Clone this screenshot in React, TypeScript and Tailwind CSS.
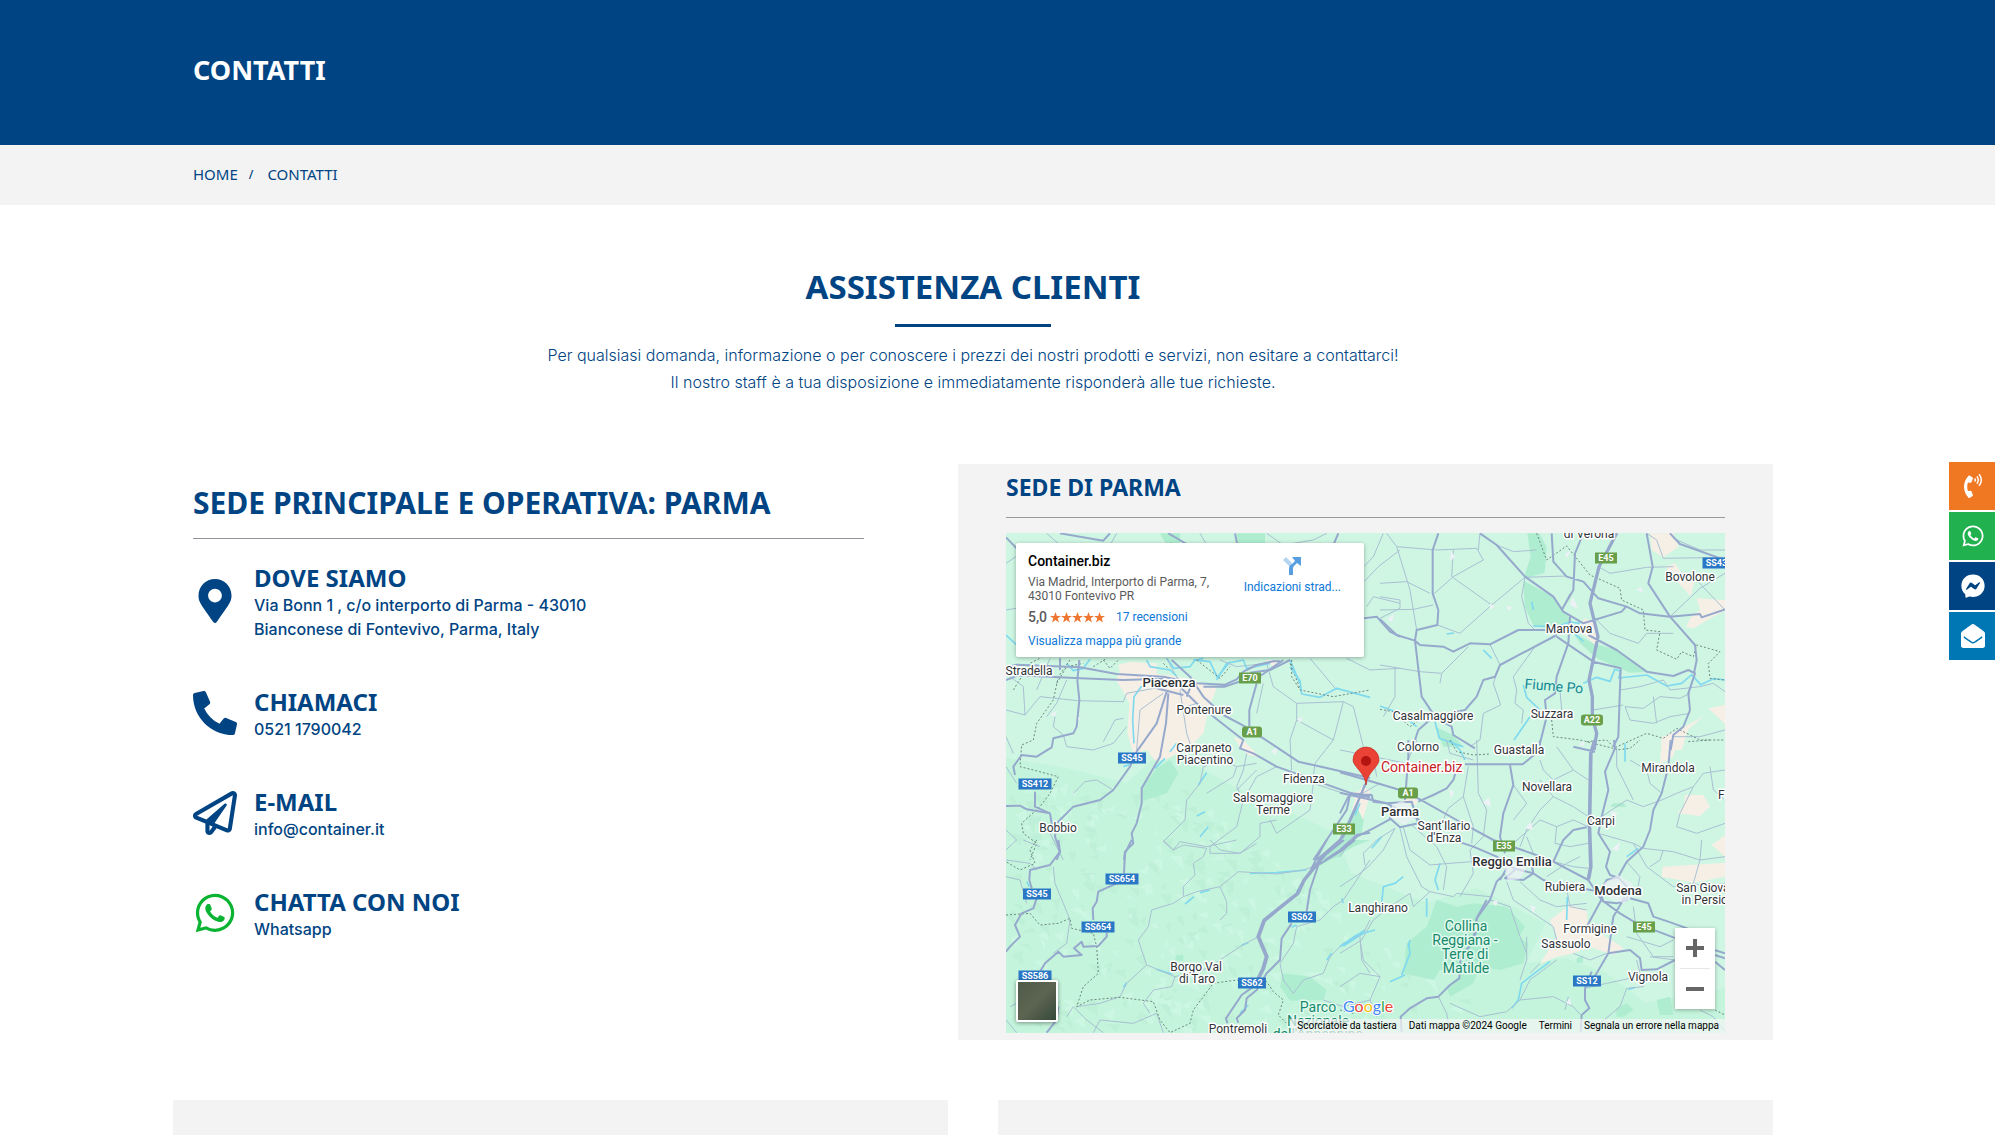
import type { ReactNode } from "react";
import {
  FaEnvelopeOpen,
  FaFacebookMessenger,
  FaMapMarkerAlt,
  FaPhoneAlt,
  FaPhoneVolume,
  FaRegPaperPlane,
  FaWhatsapp,
} from "react-icons/fa";

const heading = "font-['Noto_Sans','Open_Sans',sans-serif] font-bold uppercase text-[#004483]";

/* ---------- Map drawing ---------- */

type Sheet = {
  at: string;
  urban?: string;
  wood?: string;
  water?: string;
  minor?: string;
  major?: string;
  border?: string;
};

// Each sheet is drawn at three times the map's scale, from its own corner.
const sheets: Sheet[] = [
  {
    at: "translate(-56 -83) scale(.33333)",
    wood: "M630 250H690V285H650ZM860 250H945V285H865Z",
    urban: "M505 645L540 636L620 640L620 720H520Z",
    water:
      "M168 555L200 585M350 640L370 662L400 655L420 628M650 625L672 655L720 650L735 630L760 625M800 690L830 640L880 630L890 655L960 640M1020 630L1050 700",
    minor:
      "M168 340L198 320M168 480L198 475M290 250L330 285M500 250L480 285M750 250L770 285M950 250L1000 285L1090 270L1130 250M1242 395L1285 350L1350 300M1242 350L1270 320L1300 250M1250 470L1270 440L1350 460M650 625L700 720M1080 625L1160 720M300 625L260 720M1190 625L1260 660L1350 655",
    major:
      "M168 262L205 300M330 250L460 272L480 250M655 250L715 285M855 250L862 285M1165 250L1150 285M1242 505L1280 500L1320 545L1350 560M330 625L330 660M900 668L960 660L1020 630",
    border: "M320 700L350 650L400 640M430 650L470 625M640 640L700 700M1020 640L1050 715M190 720L240 640L270 625",
  },
  {
    at: "translate(374 -83) scale(.33333)",
    wood:
      "M442 250H478L500 292L494 368L430 386L452 320ZM430 392L520 440L575 512L530 535L462 530L434 470ZM580 548L640 580L710 600L800 665L750 668L650 625L600 580ZM165 830L220 855L250 890H190Z",
    urban:
      "M810 250H880L896 290L850 322L815 300ZM856 350L885 340L915 385L942 400L932 438L900 405ZM950 445L1035 450V482L1000 500L940 535L918 532L930 505L960 480ZM845 862L900 838L972 798L925 838L905 900H845ZM985 775L1035 765V822ZM612 505L650 520V590L600 540Z",
    water:
      "M460 528L530 530L570 516L600 520M585 552L610 574M430 705L440 742L480 780M450 800L402 870M610 700L650 682L690 694L704 658L722 664L716 684L800 675L860 708L905 700L935 674L962 704L1000 686L1035 690M0 768L60 790L110 830M165 815L178 865L250 890M455 455L460 480M310 600L335 625M200 552L222 549",
    minor:
      "M20 250L50 290L170 300L290 295L310 330L220 380L158 435M50 290L90 420L110 540M0 400L80 395L150 430M0 440L60 450L60 475L0 505M0 480L100 478L160 465M220 300L215 380L335 465L435 382M335 465L240 550L172 525M435 382L560 378M300 250L295 300M435 382L425 440L445 520L465 540M350 285L400 305L470 300M0 645L120 665L185 670L265 590M185 670L180 700M45 650L45 740L10 800M330 583L360 645M360 645L340 700L362 765L310 790L300 870L270 890M465 590L400 680L410 720L405 760L430 780L425 820M465 590L525 560M545 480L570 430M640 500L690 550L775 580L800 550L880 550M655 350L690 370L800 352L880 350M800 250L830 270L850 325L1035 322M880 265L960 300L1035 300M870 500L960 415L1035 370M940 380L1035 480M722 720L780 710L850 690L870 720L960 710L1000 700L1035 725M735 770L790 775L840 740L900 745L930 730M735 770L750 810L820 820L870 800L930 790M820 740L830 820M640 780L730 765M540 720L545 780L520 790M880 860L960 860L1035 840",
    major:
      "M175 250L158 300L158 430L175 480L172 525L110 540L105 572L125 740L165 800M0 508L50 555L105 572L120 585L190 590L220 605L270 580L330 583L415 540L500 540M530 555L360 645L345 680L310 690L290 740L255 780L160 800L115 840L105 870M300 250L350 285L435 380L520 440L550 485L610 520L725 485L738 470M515 250L520 335L560 380L610 395L655 445L740 470L780 490L870 500L960 492L965 502L1035 478M610 250L585 310L580 420L545 480M530 560L640 635L722 655L715 860L700 890M625 555L710 600L800 665L880 678L925 660L945 670L925 730L930 780L910 830L880 855L872 900M800 250L818 350L805 400L870 500L945 585L950 630L942 670M870 250L900 282L1035 330M570 500L565 580L530 680L525 730L495 750L500 800L480 880M160 800L215 830L220 855L285 895M708 250L655 350L628 460L652 560L625 690L635 740L635 800L648 850L640 900M712 250L659 350L632 460L656 560L629 690L639 740L639 800L652 850L644 900",
    border:
      "M470 250L485 290L500 330L560 288L630 375L720 415L725 450L790 480L795 540L840 545L830 600L890 628L905 605L940 620L950 585L1020 605L985 640L990 685L1035 690M0 778L40 785L90 830L130 800M515 810L520 860L600 870L700 895L800 850L850 865L890 835L960 870L1035 870",
  },
  {
    at: "translate(-16 127) scale(.33333)",
    urban:
      "M378 60L395 25L440 5L500 42L560 48L680 85L655 150L640 220L600 262L525 300L495 302L470 270L430 280L412 220L418 130L400 95ZM732 232L760 240L810 292L775 285L750 262ZM825 0H870L850 20ZM1090 395H1140L1120 480L1100 440Z",
    wood: "M540 300L565 340L530 400L460 422L455 385L500 325ZM1100 440L1135 400L1115 520L1050 590L1010 600L1070 520Z",
    water:
      "M455 78L432 110L428 180L432 250M470 0L480 20L540 30L560 48M610 0L660 5L682 52L720 5M900 20L930 62L935 102L990 112L1040 85L1140 112M650 338L625 375M645 455L620 468M655 500L630 530M495 325L525 295M540 275L560 250M400 320L425 312M1100 440L1080 480",
    minor:
      "M48 150L105 165L150 110L262 122M105 165L100 80L48 40M170 170L200 130L230 60M262 122L400 125L410 100L520 80M220 225L230 260L310 270L370 250L410 200M195 170L190 200L220 225M340 245L375 180L400 175M450 150L520 100M570 90L590 220L600 250L640 320L630 370L590 420L585 480L520 545L550 570L570 545L650 560L740 540M590 140L620 130M450 150L440 270M690 0L740 20L830 10M820 70L800 160M830 10L850 80L920 130L1060 125L1090 140L1125 280L1140 310M920 130L920 180L900 240L905 330M1060 125L1030 240L975 310L970 350M920 180L1030 240M640 320L700 300L740 320L800 310M740 320L730 350L650 400M770 280L760 330L740 380L760 420L740 500L660 560L660 580L750 580L810 530L810 490L860 480M840 480L860 520L960 450L970 370L1060 400M800 330L740 390M860 320L800 350L760 420M370 390L320 360L285 365L250 400M70 280L48 230M48 320L80 370M48 510L80 540L48 570M180 520L220 600",
    major:
      "M48 22L80 14L270 22L380 42L520 50L620 70L705 74L740 58L760 35L800 15L850 4L870 4M48 60L85 46L270 55L400 60L520 56M640 80L705 80L745 66L815 45L880 0M545 0L600 50L640 110L700 165L770 202L820 235L925 305L1000 322L1140 354M555 66L620 130L690 185L760 240L750 265L790 280L860 320L1000 370L1090 402L1140 412M800 70L778 150L778 200M530 95L500 190L440 275L420 320L370 390L330 420L250 440L200 490L195 530L210 575L200 600M535 100L528 190L510 290L455 385L455 430L440 490L425 520L430 550L405 575L402 600M268 0L262 60L268 120L260 200L250 220L190 235L185 262L140 290L95 285L70 320L75 345M135 395L135 440L180 460L185 490L200 500M48 438L90 437L110 448L180 460M590 110L600 85M500 85L580 105M1125 372L1095 450L1060 530L980 600M1080 405L1070 450L1030 510L970 600M1140 518L1100 525L1050 570L1005 600M1080 405H1140",
    border:
      "M240 0L205 50L190 120L140 190L130 240L95 255L90 320L130 330L205 350L180 400L150 440L95 490L100 520L140 550L120 600M340 0L360 25L385 0M905 0L905 50L930 90L1030 110L1140 90M620 0L690 55L720 20",
  },
  {
    at: "translate(334 207) scale(.33333)",
    urban:
      "M965 0H1012L1000 50L960 72ZM1035 165H1090L1110 200L1080 228L1012 220L1030 200ZM968 380L1155 368V410L1060 428L965 410ZM1155 285L1115 315L1155 350ZM690 495L740 510L745 560L830 610L850 625L820 645L750 620L700 640L650 650L600 672L650 590L630 540ZM190 140L235 165L230 195L190 190ZM65 140L90 150L80 200L35 210L50 165Z",
    wood:
      "M290 480L350 500L400 490L500 500L555 560L535 590L565 610L550 670L480 690L420 680L400 730L330 770L320 740L390 680L300 690L280 720L190 700L200 610L260 560ZM55 190L40 260L15 320L0 330V290L30 230ZM820 190H850L860 200H810Z",
    water:
      "M125 290L95 325M190 410L165 430L130 440L125 490M300 370L285 420L295 450M260 475L260 530M75 570L30 600L0 620M895 325L860 350M855 10L855 65M682 470L680 540M60 190L45 225M330 0L360 30L375 60M210 600L205 620",
    minor:
      "M165 265L130 330L85 380L60 400L0 440M165 265L110 300L70 340L75 375M180 265L200 350L245 440L270 455L220 500L210 460L150 500L100 540L65 600L0 640M190 262L210 330L270 375L330 370L460 360M215 255L290 320L320 380L310 450M270 455L340 470L350 460L450 470M385 80L370 170L325 205L300 260M370 170L400 260L395 310M410 0L415 160L440 210L430 290L390 330L400 400L360 470M520 135L560 190L520 240M600 120L640 170L600 210L560 270L540 320M640 170L700 200L745 230M650 20L700 90L640 120L610 90L600 60M700 90L745 120M520 310L600 240L650 260L700 240L745 260M650 260L645 310L690 320L745 310M560 290L580 340M640 365L700 380L745 385M680 445L690 500L740 510M620 410L680 370L720 350M500 425L520 480L580 520L640 560L650 600M450 480L510 500L540 590L560 640M540 425L600 480L650 500L740 490M785 230L860 180L910 200L965 180M775 280L880 310L910 325M880 180L850 120L830 80L830 20M910 325L1000 335L1080 360L1155 350M965 180L1010 160L1060 140L1090 100L1155 90M1060 140L1020 220L1010 260L1070 280L1155 250M880 310L920 380L1000 440L1060 430M870 60L920 90L930 130L965 160M1085 300L1080 360L1060 430L1090 440L1155 430M1110 80L1120 150L1155 180M860 365L900 410L890 460M930 380L960 360L970 330M320 0L330 40L400 60M0 30L100 50L200 70L230 0M100 50L110 110M50 170L120 130M0 350L40 290M880 500L890 580L940 650L1000 650M860 590L960 620L1000 600M700 640L750 660L800 640M600 670L570 700",
    major:
      "M0 97L80 120L180 150L240 178L350 240L460 300L580 342L640 365L745 420L785 480L840 520L890 550L1000 592L1155 640M0 158L60 172L140 190L230 235L310 290L400 320L470 350L520 385L580 400L610 420L680 445L740 448L780 455M762 0L750 40L746 260L750 380L743 415M767 0L755 40L751 260L755 380L748 418M822 0L825 25L795 95L805 150L785 230L775 280L810 335L798 380L810 405L840 415M992 0L985 80L965 160L940 210L930 270L910 320L860 365L835 410M510 75L520 135L490 220L480 290L495 340M375 73L548 73L600 30L600 0M205 0L205 50L195 180M235 185L280 165L320 145L340 120L355 70M155 235L100 265L50 290L0 335M0 220L30 160L95 165L100 185L140 190M80 125L20 260L0 300M495 400L470 425L450 480L410 535L400 600M480 420L500 385M525 390L495 415L550 420L580 400L575 375M640 365L670 300L700 270L740 262M700 20L765 35M785 478L740 560M855 470L820 530L805 640L770 700L755 720M870 475L925 490L940 530L985 545L1050 568M805 640L870 630L900 655L905 690L950 688L1005 660L1030 660M1125 645L1155 655M1125 665L1155 690M140 190L215 185L235 250L180 262L150 235L155 200M780 455L800 420L835 412L870 450L860 480L830 490L790 485Z",
    border: "M330 0L350 35L400 45L450 42M740 5L800 0L830 30L870 25L900 0M1045 5L1110 0",
  },
  {
    at: "translate(-16 307) scale(.33333)",
    wood: "M880 400L960 410L1010 450L1000 480L900 482L870 440ZM560 345L580 345L580 362L555 362ZM1000 45L1080 0H1140L1090 20L985 80Z",
    water:
      "M780 100L860 98L950 90M940 130L920 155M612 170L585 192M660 150L630 158M775 308L755 315M545 402L500 388M1055 175L1060 190M1120 280L1060 318M1025 340L1010 360M410 428L400 442M775 495L750 520M110 125L118 140M905 262L920 255",
    minor:
      "M520 0L550 30L580 15L650 25L640 50L610 70L615 105L580 140L580 170L620 155L690 140L745 95L860 102L940 90L985 75M690 140L710 185L710 220L690 240M580 170L550 190L485 210L475 260L445 300L470 375L410 430L390 470L330 490L260 500M470 375L555 410L545 440L490 450L460 490L480 520M555 410L640 390L690 360L750 320L805 290M1140 60L1060 180L1030 200L990 240L920 260L910 310L870 370L880 420L910 460L940 420L1000 400L1020 350L1060 310L1120 280L1140 240M660 0L690 30L750 40L800 10M150 20L100 0M190 80L195 130L220 190L240 240L230 310L190 340M48 110L90 120L110 190M48 60L120 70L140 90M60 500L100 480L130 540M48 540L80 578M230 530L250 500L290 540L340 578M310 578L330 540L430 550L500 520L520 578M1110 290L1115 360L1140 400M1000 480L1060 500L1140 480",
    major:
      "M205 0L210 35L180 75L120 90L118 120L125 145M140 175L130 205L95 220L75 255L90 290L60 320L48 335M425 0L405 40L402 100M380 130L325 155L320 185L308 205L310 240M350 278L350 290L325 318L280 320L275 305L252 325L275 345L220 350L205 335L165 370L150 395M205 500L200 540L170 578M1055 0L1000 45L940 120L920 160L850 215L820 240L802 290L827 350L817 385L790 440L755 465L708 535L712 550M1062 0L1006 45L945 120L925 162L855 218L825 243L808 290L833 350L823 385L796 440M1095 0L1050 35L985 75L960 150L950 215M905 250L875 295L870 360L830 400L800 450L770 475L765 510L740 535L745 548M1010 0L985 45L960 95",
    border:
      "M140 0L120 30L135 70L90 90L48 65M48 225L120 220L150 255L205 250L240 235L245 265L310 280L320 320L325 400L280 440L260 500L300 480L390 472L490 485L510 540L540 578L600 550L610 510L670 430L740 420L830 425L850 455L880 480L865 525L900 560",
  },
  {
    at: "translate(334 367) scale(.33333)",
    wood: "M828 325L860 310L880 330L850 350H830ZM950 300L990 290L1000 345H960ZM710 175L730 165L728 188L710 188Z",
    water: "M630 185L590 215L545 250L535 300L515 325M195 225L150 245M205 130L210 160L185 225M105 90L50 105L0 140M865 268L885 262",
    minor:
      "M60 120L70 180L120 230L90 300L110 350M0 260L60 220L120 230M295 290L320 340L330 395M330 310L420 350L500 335L540 300L640 290L700 320L722 345M650 180L570 240L540 300M560 110L560 180L540 240M685 290L675 330M735 265L800 250L870 235L920 220M860 265L840 320L780 370L770 395M890 180L910 260L860 265M930 170L1005 180M1080 330L1120 350L1155 395",
    major:
      "M440 0L410 55L405 120L362 170L358 235L330 255L295 290L260 295L210 325L182 350L185 395M755 215L735 265L735 300L748 325L725 345L722 395",
    border: "M0 330L40 340M1125 330L1155 345",
  },
];

// Shaded facets of the Apennine hills, from a repeatable sequence.
const facets = (() => {
  let seed = 17;
  const next = () => {
    seed = (seed * 16807) % 2147483647;
    return seed / 2147483647;
  };
  let dark = "";
  let light = "";
  for (let i = 0; i < 360; i++) {
    const y = 255 + next() * 245;
    const x = next() * (150 + (y - 240) * 1.35);
    const p = `M${x.toFixed(0)} ${y.toFixed(0)}l${(4 + next() * 9).toFixed(0)} ${(-6 + next() * 8).toFixed(0)}l${(-3 + next() * 6).toFixed(0)} ${(5 + next() * 9).toFixed(0)}z`;
    if (i % 2) dark += p;
    else light += p;
  }
  return { dark, light };
})();

const towns: [number, number, string][] = [
  [583, 1, "di Verona"],
  [684, 44, "Bovolone"],
  [563, 96, "Mantova"],
  [546, 181, "Suzzara"],
  [427, 183, "Casalmaggiore"],
  [412, 214, "Colorno"],
  [513, 217, "Guastalla"],
  [23, 138, "Stradella"],
  [198, 177, "Pontenure"],
  [198, 215, "Carpaneto"],
  [199, 227, "Piacentino"],
  [298, 246, "Fidenza"],
  [267, 265, "Salsomaggiore"],
  [267, 277, "Terme"],
  [52, 295, "Bobbio"],
  [438, 293, "Sant'Ilario"],
  [438, 305, "d'Enza"],
  [559, 354, "Rubiera"],
  [372, 375, "Langhirano"],
  [595, 288, "Carpi"],
  [662, 235, "Mirandola"],
  [541, 254, "Novellara"],
  [728, 262, "Finale"],
  [705, 355, "San Giovanni"],
  [707, 367, "in Persiceto"],
  [584, 396, "Formigine"],
  [560, 411, "Sassuolo"],
  [642, 444, "Vignola"],
  [190, 434, "Borgo Val"],
  [191, 446, "di Taro"],
  [232, 496, "Pontremoli"],
];

const cities: [number, number, string][] = [
  [163, 149, "Piacenza"],
  [394, 278, "Parma"],
  [506, 328, "Reggio Emilia"],
  [612, 357, "Modena"],
];

const parks: [number, number, string][] = [
  [460, 393, "Collina"],
  [459, 407, "Reggiana -"],
  [459, 421, "Terre di"],
  [460, 435, "Matilde"],
  [312, 474, "Parco"],
  [312, 488, "Nazionale"],
  [312, 501, "dell'Appennino"],
];

const shields: [number, number, string, string][] = [
  [600, 25, "E45", "#689f4a"],
  [586, 187, "A22", "#689f4a"],
  [244, 145, "E70", "#689f4a"],
  [246, 199, "A1", "#689f4a"],
  [338, 296, "E33", "#689f4a"],
  [402, 260, "A1", "#689f4a"],
  [498, 313, "E35", "#689f4a"],
  [638, 394, "E45", "#689f4a"],
  [713, 30, "SS434", "#2a77c5"],
  [126, 225, "SS45", "#2a77c5"],
  [29, 251, "SS412", "#2a77c5"],
  [116, 346, "SS654", "#2a77c5"],
  [31, 361, "SS45", "#2a77c5"],
  [92, 394, "SS654", "#2a77c5"],
  [29, 443, "SS586", "#2a77c5"],
  [296, 384, "SS62", "#2a77c5"],
  [246, 450, "SS62", "#2a77c5"],
  [581, 448, "SS12", "#2a77c5"],
];

const shieldWidth: Record<number, number> = { 2: 20, 3: 22, 4: 28, 5: 33 };

function MapDrawing() {
  return (
    <svg
      viewBox="0 0 719 500"
      preserveAspectRatio="xMidYMid slice"
      className="block h-full w-full font-[Roboto,sans-serif]"
      role="img"
      aria-label="Mappa di Parma"
    >
      <rect width="719" height="500" fill="#cef6e2" />
      <path
        d="M0 225L60 235L120 250L160 215L230 255L330 300L345 340L420 370L470 355L540 390L520 430L560 425L600 440L640 470L719 455V500H0Z"
        fill="#c4f4db"
      />
      <path d={facets.dark} fill="#b5ecd0" opacity=".45" />
      <path d={facets.light} fill="#d2f8e6" opacity=".6" />
      {sheets.map((s) => (
        <g key={s.at} transform={s.at} fill="none" strokeLinejoin="round">
          <path d={s.wood} fill="#aeedd0" />
          <path d={s.urban} fill="#f6efe6" />
        </g>
      ))}
      {sheets.map((s) => (
        <g key={s.at} transform={s.at} fill="none" strokeLinejoin="round">
          <path d={s.water} stroke="#7fd9ef" strokeWidth="5" />
          <path d={s.minor} stroke="#a9c0d3" strokeWidth="3" />
          <path d={s.border} stroke="#6c8880" strokeWidth="3" strokeDasharray="6 6" />
          <path d={s.major} stroke="#96a9cd" strokeWidth="6" />
        </g>
      ))}
      <g fill="#eef1f6">
        <path d="M386 272l10-4 8 4 8 12-14 8-14-8zM498 332l12-2 10 6-6 10-12 2zM598 350l14-8 14 8 4 10-12 10-14-4z" opacity=".7" />
        <path d="M44 181l7-3-3 6zM291 186l6-2-3 6zM519 295l6-6 2 8zM604 278l8 2-5 5zM443 256l5 3-3 6zM477 270l6-6 2 10zM445 18l4 6-5 4zM559 21l6-4-4 8zM484 71l5 2-5 4zM500 73l6 1-3 4zM381 86l7-5-2 8zM606 316l8-7-2 9zM630 57l5-3 2 5zM486 369l6-2-2 6zM573 211l6-3-2 6zM564 72l3-8 5 12zM524 372l6 2-3 6zM560 470l4-5 1 7zM72 184l3 2-2 2zM265 218l6-3-1 7z" />
      </g>
      <g textAnchor="middle" dominantBaseline="central" strokeLinejoin="round">
        <g fontSize="12" fill="#2f3438" stroke="#ffffff" strokeWidth="3">
          {towns.map(([x, y, t]) => (
            <text key={t} x={x} y={y} style={{ paintOrder: "stroke" }}>{t}</text>
          ))}
        </g>
        <g fontSize="13" fontWeight="500" fill="#2c3135" stroke="#ffffff" strokeWidth="3">
          {cities.map(([x, y, t]) => (
            <text key={t} x={x} y={y} style={{ paintOrder: "stroke" }}>{t}</text>
          ))}
        </g>
        <g fontSize="14" fill="#17896b" stroke="#e3fbef" strokeWidth="3">
          {parks.map(([x, y, t]) => (
            <text key={t} x={x} y={y} style={{ paintOrder: "stroke" }}>{t}</text>
          ))}
        </g>
        <text x="548" y="153" fontSize="14" fill="#128796" stroke="#cef6e2" strokeWidth="2" transform="rotate(5 548 153)" style={{ paintOrder: "stroke" }}>
          Fiume Po
        </text>
        <g fontSize="9" fontWeight="700" fill="#ffffff">
          {shields.map(([x, y, t, c]) => (
            <g key={`${t}-${x}`}>
              <rect
                x={x - shieldWidth[t.length] / 2}
                y={y - 5.5}
                width={shieldWidth[t.length]}
                height="11"
                rx={t.startsWith("A") ? 3 : 0}
                fill={c}
              />
              <text x={x} y={y}>{t}</text>
            </g>
          ))}
        </g>
      </g>
      <path d="M360 252c-1-8-4-11-8-16-3-4-5-6-5-9a13 13 0 0 1 26 0c0 3-2 5-5 9-4 5-7 8-8 16z" fill="#ea4335" stroke="#c5221f" strokeWidth=".6" />
      <circle cx="360" cy="228" r="5" fill="#b31412" />
      <text x="375" y="239" fontSize="14" fill="#c5221f" stroke="#ffffff" strokeWidth="3" style={{ paintOrder: "stroke" }}>
        Container.biz
      </text>
      <text x="337" y="479" fontSize="16" fontWeight="400" className="font-['Lato',sans-serif]" stroke="#ffffff" strokeWidth="2" style={{ paintOrder: "stroke" }}>
        <tspan fill="#4285f4">G</tspan>
        <tspan fill="#ea4335">o</tspan>
        <tspan fill="#fbbc05">o</tspan>
        <tspan fill="#4285f4">g</tspan>
        <tspan fill="#34a853">l</tspan>
        <tspan fill="#ea4335">e</tspan>
      </text>
    </svg>
  );
}

function PlaceCard() {
  return (
    <div className="absolute top-[10px] left-[10px] flex w-[348px] justify-between rounded-xs bg-white pt-3 pr-[23px] pb-2 pl-3 text-xs shadow-[0_1px_4px_rgba(0,0,0,0.3)]">
      <div>
        <div className="text-sm leading-3 font-medium text-black">Container.biz</div>
        <address className="mt-2 leading-[14px] text-[#5b5b5b] not-italic">
          Via Madrid, Interporto di Parma, 7,
          <br />
          43010 Fontevivo PR
        </address>
        <div className="mt-[6px] flex h-4 items-center">
          <span className="text-sm font-medium text-[#5b5b5b]">5,0</span>
          <span className="ml-[3px] flex" role="img" aria-label="5 stelle">
            {[0, 1, 2, 3, 4].map((n) => (
              <svg key={n} viewBox="0 0 22 22" className="size-[11px]" fill="#ee7630" aria-hidden="true">
                <path d="M11 0L13.8 7.8H22L15.5 12.7L17.8 21L11 16L4.2 21L6.5 12.7L0 7.8H8.2Z" />
              </svg>
            ))}
          </span>
          <a href="#recensioni" className="ml-[11px] text-[#0b78d8]">17 recensioni</a>
        </div>
        <a href="#mappa" className="mt-2 block leading-4 text-[#0b78d8]">Visualizza mappa più grande</a>
      </div>
      <a href="#indicazioni" className="flex flex-col items-center gap-1 pt-[2px] text-[#0b78d8]">
        <svg viewBox="0 0 18 18" className="size-[18px]" aria-hidden="true">
          <path d="M0 3L3 0L9 6L7 10Z" fill="#b5d5f3" />
          <path d="M6 18V12C6 9 7 8 9 7L12 4L9 0H18V9L14 6L11 9C10 10 10 11 10 12V18Z" fill="#589fe2" />
        </svg>
        <span>Indicazioni strad...</span>
      </a>
    </div>
  );
}

function ParmaMap() {
  return (
    <div className="relative mt-[15px] h-[500px] overflow-hidden font-[Roboto,sans-serif]">
      <MapDrawing />
      <PlaceCard />
      <button
        type="button"
        aria-label="Vista satellite"
        className="absolute bottom-[11px] left-[10px] size-[42px] rounded-xs border-2 border-white bg-linear-to-br from-[#4d5b48] via-[#5e6452] to-[#344a3a] shadow-[0_1px_4px_rgba(0,0,0,0.4)]"
      />
      <div className="absolute right-[10px] bottom-6 flex w-10 flex-col bg-white shadow-[0_1px_4px_rgba(0,0,0,0.3)]">
        <button type="button" aria-label="Zoom avanti" className="flex h-10 items-center justify-center">
          <svg viewBox="0 0 18 18" className="size-[18px]" fill="#666666" aria-hidden="true">
            <path d="M7 0h4v7h7v4h-7v7H7v-7H0V7h7z" />
          </svg>
        </button>
        <span className="mx-[5px] h-px bg-[#e6e6e6]" />
        <button type="button" aria-label="Zoom indietro" className="flex h-10 items-center justify-center">
          <svg viewBox="0 0 18 18" className="size-[18px]" fill="#666666" aria-hidden="true">
            <path d="M0 7h18v4H0z" />
          </svg>
        </button>
      </div>
      <div className="absolute right-0 bottom-0 flex h-[14px] text-[10px] leading-[14px] text-black">
        <button type="button" className="bg-[#f5f5f5]/70 px-[6px]">Scorciatoie da tastiera</button>
        <span className="bg-[#f5f5f5]/70 px-[6px]">Dati mappa ©2024 Google</span>
        <a href="#termini" className="bg-[#f5f5f5]/70 px-[6px]">Termini</a>
        <a href="#segnala" className="bg-[#f5f5f5]/70 px-[6px]">Segnala un errore nella mappa</a>
      </div>
    </div>
  );
}

/* ---------- Page ---------- */

function Contact({ icon, title, children }: { icon: ReactNode; title: string; children: ReactNode }) {
  return (
    <li className="flex items-center gap-[17px]">
      <span className="flex w-11 justify-center pb-[5px] text-[44px]">{icon}</span>
      <div>
        <h3 className={`${heading} pb-[2px] text-2xl leading-[26px]`}>{title}</h3>
        <div className="text-base leading-6 font-medium">{children}</div>
      </div>
    </li>
  );
}

const quick = [
  { label: "Telefono", color: "bg-[#f07822]", icon: <FaPhoneVolume /> },
  { label: "WhatsApp", color: "bg-[#22b14f]", icon: <FaWhatsapp /> },
  { label: "Messenger", color: "bg-[#004483]", icon: <FaFacebookMessenger /> },
  { label: "E-mail", color: "bg-[#0077b5]", icon: <FaEnvelopeOpen /> },
];

export default function App() {
  return (
    <div className="h-screen overflow-hidden bg-white font-[Inter,sans-serif] text-[#004483]">
      <header className="h-[145px] bg-[#004483] pr-[49px]">
        <div className="mx-auto max-w-[1600px] px-5 pt-[52px]">
          <h1 className="font-['Noto_Sans','Open_Sans',sans-serif] text-[27px] leading-9 font-bold text-white">CONTATTI</h1>
        </div>
      </header>
      <nav aria-label="Breadcrumb" className="bg-[#f3f3f3] pr-[49px]">
        <div className="mx-auto flex h-[60px] max-w-[1600px] items-center px-5 pb-[2px] font-['Noto_Sans','Open_Sans',sans-serif] text-[15px] font-normal">
          <a href="#home">HOME</a>
          <span className="mr-[14px] ml-[11px] pt-[2px] text-xs font-medium">/</span>
          <span>CONTATTI</span>
        </div>
      </nav>
      <main className="pr-[49px]">
        <div className="mx-auto max-w-[1600px]">
          <section className="flex flex-col items-center pt-[60px] text-center">
            <h2 className={`${heading} text-[33px] leading-[44px]`}>Assistenza clienti</h2>
            <span className="mt-[15px] h-[3px] w-[156px] bg-[#004483]" />
            <p className="mt-[15px] text-base leading-[27px] font-light">
              Per qualsiasi domanda, informazione o per conoscere i prezzi dei nostri prodotti e servizi, non esitare a contattarci!
              <br />
              Il nostro staff è a tua disposizione e immediatamente risponderà alle tue richieste.
            </p>
          </section>
          <div className="mt-[68px] flex">
            <section className="flex-1 pt-5 pr-[94px] pl-5">
              <h2 className={`${heading} border-b border-[#8f959b] pb-4 text-[30px] leading-[38px]`}>
                Sede principale e operativa: Parma
              </h2>
              <ul className="mt-[26px] flex flex-col gap-12">
                <Contact icon={<FaMapMarkerAlt />} title="Dove siamo">
                  Via Bonn 1 , c/o interporto di Parma - 43010
                  <br />
                  Bianconese di Fontevivo, Parma, Italy
                </Contact>
                <Contact icon={<FaPhoneAlt />} title="Chiamaci">
                  <a href="tel:05211790042">0521 1790042</a>
                </Contact>
                <Contact icon={<FaRegPaperPlane />} title="E-mail">
                  <a href="mailto:info@container.it">info@container.it</a>
                </Contact>
                <Contact icon={<FaWhatsapp className="text-[#0ab432]" />} title="Chatta con noi">
                  <a href="#whatsapp">Whatsapp</a>
                </Contact>
              </ul>
            </section>
            <section className="w-[815px] bg-[#f3f3f3] px-12 pt-[7px] pb-[7px]">
              <h2 className={`${heading} border-b border-[#969c9c] pb-[14px] text-[23px] leading-8`}>Sede di Parma</h2>
              <ParmaMap />
            </section>
          </div>
          <div className="mt-[60px] grid grid-cols-2 gap-[50px]">
            <div className="h-80 bg-[#f3f3f3]" />
            <div className="h-80 bg-[#f3f3f3]" />
          </div>
        </div>
      </main>
      <aside className="fixed top-[462px] right-0 flex flex-col gap-[2px]">
        {quick.map((q) => (
          <a
            key={q.label}
            href={`#${q.label.toLowerCase()}`}
            aria-label={q.label}
            className={`flex h-12 w-[46px] items-center justify-center pl-[2px] text-2xl text-white ${q.color}`}
          >
            {q.icon}
          </a>
        ))}
      </aside>
    </div>
  );
}
